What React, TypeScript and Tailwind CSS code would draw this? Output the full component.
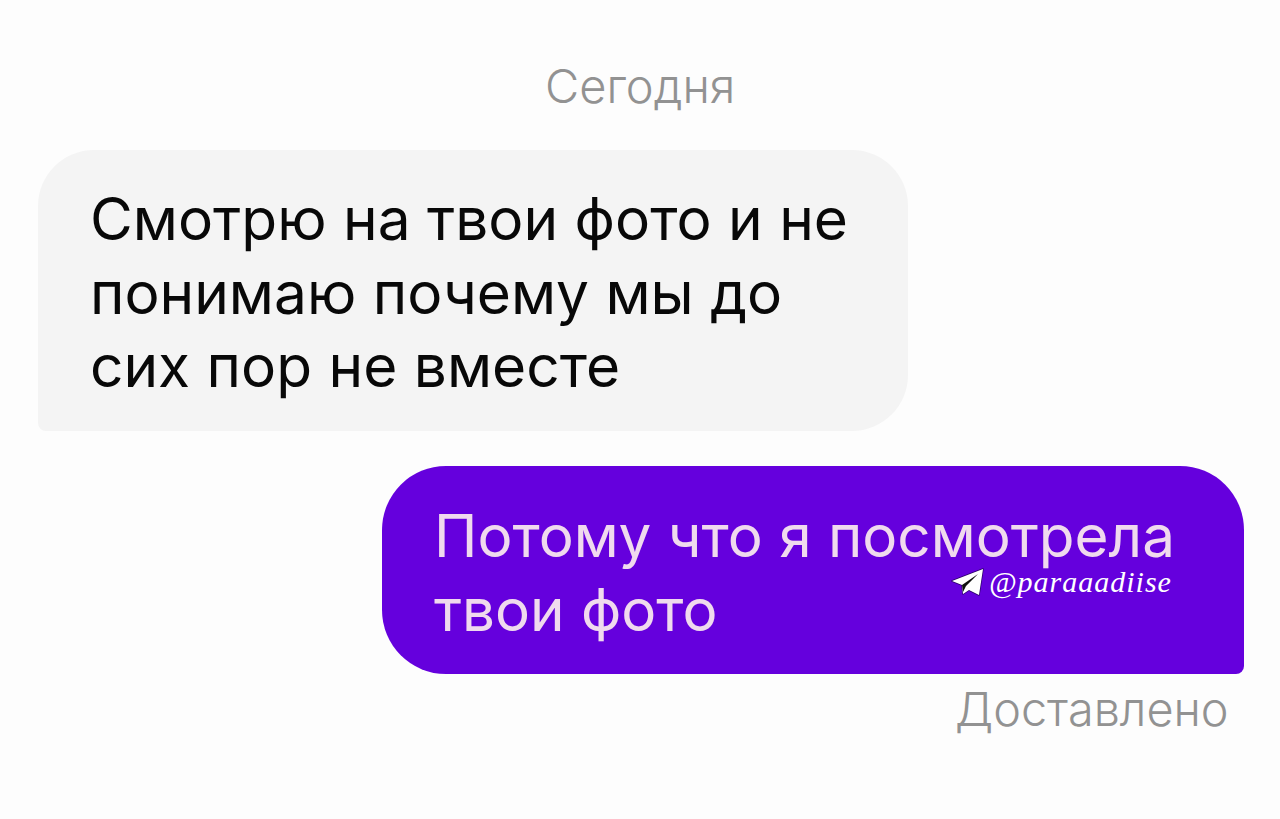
import clsx from 'clsx'

interface MessageProps {
  lines: string[]
  own?: boolean
}

function Message({ lines, own = false }: MessageProps) {
  return (
    <div
      className={clsx(
        'relative leading-[73.5px]',
        own
          ? 'ml-auto mr-[36px] h-[208px] w-[862px] rounded-[64px] rounded-br-[8px] bg-[#6500dd] pl-[52px] pt-[33px] text-[58.4px] text-[#f0daee]'
          : 'ml-[38px] h-[281px] w-[870px] rounded-[56px] rounded-bl-[8px] bg-[#f4f4f4] pl-[52px] pt-[32px] text-[58.6px] text-[#080808]'
      )}
    >
      {lines.map((line) => (
        <p key={line} className="whitespace-nowrap">{line}</p>
      ))}
      {own && <Watermark />}
    </div>
  )
}

function Watermark() {
  return (
    <div className="absolute left-[569px] top-[99px] flex h-[34px] items-center gap-[4px] text-white">
      <svg className="h-[30px] w-[34px]" viewBox="0 0 34 30">
        <path
          d="M32 2 1 14l10 4 1 9 6-4 10 5Z"
          fill="#fff"
          stroke="#2b0068"
          strokeWidth="1.5"
          strokeLinejoin="round"
          paintOrder="stroke"
        />
        <path d="M27 7 11 18l1 7 3-6Z" fill="#101010" />
      </svg>
      <span className="whitespace-nowrap font-['Liberation_Serif',serif] text-[30px] italic leading-[34px] tracking-[1px]">
        @paraaadiise
      </span>
    </div>
  )
}

export default function App() {
  return (
    <main className="h-[819px] w-[1280px] overflow-hidden bg-[#fdfdfd] font-['Inter',sans-serif]">
      <div className="h-[150px] pl-[545px] pt-[61px] text-[47px] font-light leading-[50px] text-[#929292]">Сегодня</div>
      <Message lines={['Смотрю на твои фото и не', 'понимаю почему мы до', 'сих пор не вместе']} />
      <div className="h-[35px]" />
      <Message own lines={['Потому что я посмотрела', 'твои фото']} />
      <div className="mt-[10px] pl-[955px] text-[46.8px] font-light leading-[50px] text-[#929292]">Доставлено</div>
    </main>
  )
}
